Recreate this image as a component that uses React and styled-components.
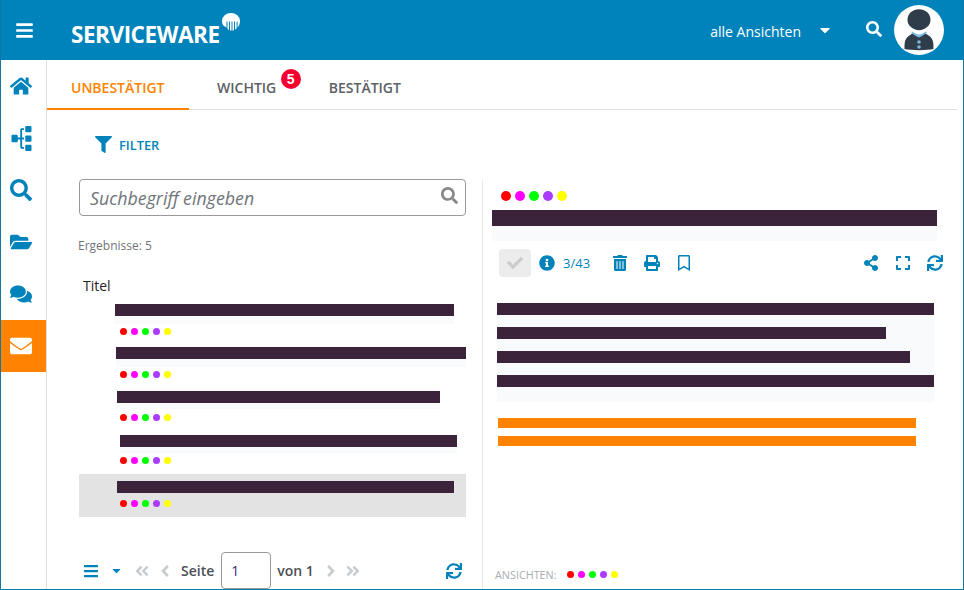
import { createGlobalStyle, styled } from "styled-components";
import {
  FaBars,
  FaRegBookmark,
  FaCaretDown,
  FaCheck,
  FaComments,
  FaEnvelope,
  FaExpand,
  FaFilter,
  FaFolderOpen,
  FaHome,
  FaInfoCircle,
  FaPrint,
  FaSearch,
  FaShareAlt,
  FaSitemap,
  FaSync,
  FaTrashAlt,
  FaAngleDoubleLeft,
  FaAngleDoubleRight,
  FaAngleLeft,
  FaAngleRight,
} from "react-icons/fa";

const BLUE = "#0083bb";
const ORANGE = "#ff8300";
const DARK = "#3b243b";

const GlobalStyle = createGlobalStyle`
  html, body {
    margin: 0;
    padding: 0;
    height: 100%;
    background: #fff;
  }
  body {
    font-family: "Open Sans", "Liberation Sans", sans-serif;
  }
`;

const Frame = styled.div`
  width: 964px;
  height: 590px;
  box-sizing: border-box;
  border: 1px solid #0f78a3;
  border-top: none;
  display: flex;
  flex-direction: column;
  overflow: hidden;
`;

const Header = styled.header`
  height: 60px;
  flex: none;
  margin: 0 -1px;
  background: ${BLUE};
  color: #fff;
  display: flex;
  align-items: center;
  padding: 0 20px 0 15px;
`;

const Burger = styled(FaBars)`
  font-size: 19px;
  margin-right: 37px;
`;

const Logo = styled.div`
  display: flex;
  align-items: flex-start;
  align-self: stretch;
  flex: 1;
`;

const LogoText = styled.span`
  font-size: 22.5px;
  font-weight: 700;
  line-height: 30px;
  letter-spacing: -0.46px;
  margin-top: 20px;
`;

const LogoMark = styled.svg`
  width: 18px;
  height: 18px;
  margin: 13px 0 0 2px;
`;

const ViewSelect = styled.div`
  display: flex;
  align-items: center;
  font-size: 14px;
  margin-right: 33px;
  padding-top: 2px;
  svg {
    margin: -2px 0 0 16px;
    font-size: 16px;
  }
`;

const HeaderSearch = styled(FaSearch)`
  font-size: 16px;
  margin-right: 12px;
  margin-top: -2px;
`;

const Avatar = styled.svg`
  width: 50px;
  height: 50px;
`;

const Body = styled.div`
  flex: 1;
  display: flex;
  min-height: 0;
`;

const Sidebar = styled.nav`
  width: 45px;
  flex: none;
  border-right: 1px solid #e0e0e0;
  display: flex;
  flex-direction: column;
`;

const SideItem = styled.div`
  height: 52px;
  box-sizing: border-box;
  padding-right: 5px;
  display: flex;
  align-items: center;
  justify-content: center;
  font-size: 22px;
  color: ${(p) => (p.$active ? "#fff" : BLUE)};
  background: ${(p) => (p.$active ? ORANGE : "transparent")};
`;

const SitemapIcon = styled(FaSitemap)`
  font-size: 25px;
  transform: rotate(-90deg);
`;

const Main = styled.main`
  flex: 1;
  min-width: 0;
  display: flex;
  flex-direction: column;
`;

const Tabs = styled.div`
  height: 50px;
  flex: none;
  box-sizing: border-box;
  border-bottom: 1px solid #e0e0e0;
  margin-right: 6px;
  display: flex;
`;

const Tab = styled.div`
  position: relative;
  box-sizing: border-box;
  height: 50px;
  padding: 7px 24.5px 0 ${(p) => p.$left}px;
  display: flex;
  align-items: center;
  font-size: 14px;
  font-weight: 600;
  color: ${(p) => (p.$active ? ORANGE : "#5c6166")};
  border-bottom: 2px solid ${(p) => (p.$active ? ORANGE : "transparent")};
`;

const Badge = styled.span`
  position: absolute;
  top: 9px;
  right: 0;
  width: 20px;
  height: 20px;
  border-radius: 50%;
  background: #f5002f;
  color: #fff;
  font-family: "Liberation Sans", sans-serif;
  font-size: 14px;
  font-weight: 700;
  line-height: 20px;
  text-align: center;
`;

const Panes = styled.div`
  flex: 1;
  min-height: 0;
  display: flex;
`;

const LeftPane = styled.section`
  width: 435px;
  flex: none;
  box-sizing: border-box;
  padding: 0 16px 0 32px;
  display: flex;
  flex-direction: column;
`;

const FilterButton = styled.div`
  height: 69px;
  flex: none;
  display: flex;
  align-items: center;
  gap: 7px;
  padding-left: 16px;
  color: ${BLUE};
  font-size: 12.8px;
  font-weight: 600;
  svg {
    font-size: 17px;
  }
`;

const SearchBox = styled.div`
  height: 37px;
  flex: none;
  box-sizing: border-box;
  border: 1px solid #999;
  border-radius: 4px;
  display: flex;
  align-items: center;
  justify-content: space-between;
  padding: 0 7px 0 10px;
  font-size: 17.8px;
  font-style: italic;
  color: #70757a;
  svg {
    font-size: 17px;
    color: #888;
    margin-top: -4px;
  }
`;

const Results = styled.div`
  margin: 21px 0 0 -1px;
  font-size: 12px;
  line-height: 18px;
  color: #70757a;
`;

const ListTitle = styled.div`
  margin: 21px 0 0 4px;
  font-size: 14px;
  line-height: 19px;
  color: #222;
`;

const ResultList = styled.div`
  margin-top: 9px;
  display: flex;
  flex-direction: column;
`;

const ResultRow = styled.div`
  height: ${(p) => p.$height}px;
  box-sizing: border-box;
  padding-top: ${(p) => (p.$selected ? 7 : 0)}px;
  padding-left: ${(p) => p.$indent}px;
  background: ${(p) => (p.$selected ? "#e3e3e3" : "transparent")};
`;

const Bar = styled.div`
  height: ${(p) => p.$height}px;
  background: ${(p) => p.$color || DARK};
`;

const Band = styled.div`
  height: ${(p) => p.$height}px;
  background: #f9fafc;
`;

const Dots = styled.div`
  display: flex;
  align-items: center;
  gap: ${(p) => p.$gap}px;
`;

const Dot = styled.span`
  width: ${(p) => p.$size}px;
  height: ${(p) => p.$size}px;
  border-radius: 50%;
  background: ${(p) => p.$color};
`;

const RowDots = styled(Dots)`
  margin: ${(p) => p.$top}px 0 0 ${(p) => p.$left}px;
`;

const Pager = styled.div`
  margin-top: auto;
  height: 37px;
  flex: none;
  display: flex;
  align-items: center;
  font-size: 14px;
  font-weight: 600;
  color: #4a5056;
`;

const PagerIcon = styled.span`
  display: inline-flex;
  font-size: ${(p) => p.$size || 16}px;
  color: ${(p) => (p.$muted ? "#c9ccce" : BLUE)};
  margin-left: ${(p) => p.$left || 0}px;
  margin-right: ${(p) => p.$right || 0}px;
`;

const PageLabel = styled.span`
  margin-left: 7px;
`;

const PageInput = styled.div`
  width: 50px;
  height: 37px;
  box-sizing: border-box;
  border: 1px solid #999;
  border-radius: 4px;
  margin: 0 6px 0 7px;
  padding-left: 9px;
  font-weight: 400;
  line-height: 35px;
  color: #3b2a7a;
`;

const RightPane = styled.section`
  flex: 1;
  min-width: 0;
  margin-top: 70px;
  border-left: 1px solid #eaeaea;
  display: flex;
  flex-direction: column;
  padding: 11px 26px 0 9px;
`;

const TitleDots = styled(Dots)`
  margin-left: 9px;
  height: 10px;
`;

const TitleBar = styled(Bar)`
  margin-top: 9px;
`;

const Toolbar = styled.div`
  margin: 8px -6px 0 7px;
  height: 28px;
  display: flex;
  align-items: center;
  color: ${BLUE};
  font-size: 13px;
  font-weight: 500;
`;

const CheckButton = styled.div`
  width: 32px;
  height: 28px;
  border-radius: 4px;
  background: #ececec;
  color: #cccccc;
  font-size: 16px;
  display: flex;
  align-items: center;
  justify-content: center;
  margin-right: 8px;
`;

const ToolIcon = styled.span`
  display: inline-flex;
  font-size: 16px;
  margin-left: ${(p) => p.$left || 0}px;
`;

const Pages = styled.span`
  margin-left: 8px;
`;

const Spacer = styled.div`
  flex: 1;
`;

const Content = styled.div`
  margin: 26px 3px 0 5px;
  background: #f9fafc;
  padding-bottom: 15px;
  display: flex;
  flex-direction: column;
  gap: 12px;
`;

const ContentBar = styled(Bar)`
  margin-right: ${(p) => p.$cut}px;
`;

const Marks = styled.div`
  margin: 16px 21px 0 6px;
  display: flex;
  flex-direction: column;
  gap: 8px;
`;

const ViewsFooter = styled.div`
  margin-top: auto;
  height: 29px;
  padding: 0 0 0 3px;
  display: flex;
  align-items: center;
  gap: 10px;
  font-size: 10.8px;
  color: #a9adb1;
`;

const COLORS = ["#ff0000", "#ff00ff", "#00ff00", "#aa3bff", "#ffff00"];

const DotRow = ({ as: Wrap = Dots, size = 7, gap = 4, ...rest }) => (
  <Wrap $gap={gap} {...rest}>
    {COLORS.map((c) => (
      <Dot key={c} $size={size} $color={c} />
    ))}
  </Wrap>
);

const ROWS = [
  { indent: 36, width: 339, band: 8, dotsTop: 4, height: 43 },
  { indent: 37, width: 350, band: 8, dotsTop: 4, height: 44 },
  { indent: 38, width: 323, band: 6, dotsTop: 5, height: 44 },
  { indent: 41, width: 337, band: 6, dotsTop: 4, height: 39 },
  { indent: 38, width: 337, band: 0, dotsTop: 7, height: 43, selected: true },
];

const App = () => {
  return (
    <>
      <GlobalStyle />
      <Frame>
        <Header>
          <Burger />
          <Logo>
            <LogoText>SERVICEWARE</LogoText>
            <LogoMark viewBox="0 0 18 18">
              <path
                d="M0 8a9 8 0 0 1 18 0c0 3-1 5-2.400 6.400V8.600h-1v7l-1.600 .9V8.600h-1v8.600l-1.500 .5V8.600h-1v9.100l-1.500-.4V8.600h-1v8.300l-1.500-.9V8.600h-1v5.800C1 13 0 11 0 8z"
                fill="#fff"
              />
            </LogoMark>
          </Logo>
          <ViewSelect>
            alle Ansichten
            <FaCaretDown />
          </ViewSelect>
          <HeaderSearch />
          <Avatar viewBox="0 0 50 50">
            <circle cx="25" cy="25" r="25" fill="#fff" />
            <path
              d="M10.500 44c0-5 0-9 3-12 2-2 4-3 6-4l5.500 4 5.500-4c2 1 4 2 6 4 3 3 3 7 3 12 -6 1.500-23 1.500-29 0z"
              fill="#2f3c4a"
            />
            <path
              d="M18 26.500c2 1 4 2.500 7 3 3-.5 5-2 7-3l.8 1.500c-2 1-5 3.500-7.800 4.500-2.800-1-5.800-3.500-7.800-4.500z"
              fill="#7fc0e6"
            />
            <ellipse cx="25" cy="14.700" rx="11.500" ry="10.500" fill="#2f3c4a" />
            <circle cx="25" cy="37" r="1.800" fill="#7fb5d5" />
            <circle cx="25" cy="42" r="1.800" fill="#7fb5d5" />
          </Avatar>
        </Header>
        <Body>
          <Sidebar>
            <SideItem><FaHome /></SideItem>
            <SideItem><SitemapIcon /></SideItem>
            <SideItem><FaSearch /></SideItem>
            <SideItem><FaFolderOpen /></SideItem>
            <SideItem><FaComments /></SideItem>
            <SideItem $active><FaEnvelope /></SideItem>
          </Sidebar>
          <Main>
            <Tabs>
              <Tab $active $left={24}>UNBESTÄTIGT</Tab>
              <Tab $left={28}>
                WICHTIG
                <Badge>5</Badge>
              </Tab>
              <Tab $left={28}>BESTÄTIGT</Tab>
            </Tabs>
            <Panes>
              <LeftPane>
                <FilterButton>
                  <FaFilter />
                  FILTER
                </FilterButton>
                <SearchBox>
                  Suchbegriff eingeben
                  <FaSearch />
                </SearchBox>
                <Results>Ergebnisse: 5</Results>
                <ListTitle>Titel</ListTitle>
                <ResultList>
                  {ROWS.map((r) => (
                    <ResultRow
                      key={r.indent + r.width}
                      $indent={r.indent}
                      $height={r.height}
                      $selected={r.selected}
                    >
                      <Bar $height={12} style={{ width: r.width }} />
                      <Band $height={r.band} style={{ width: r.width }} />
                      <DotRow
                        as={RowDots}
                        $top={r.dotsTop}
                        $left={41 - r.indent}
                      />
                    </ResultRow>
                  ))}
                </ResultList>
                <Pager>
                  <PagerIcon $left={4}><FaBars /></PagerIcon>
                  <PagerIcon $left={10.5} $size={13}><FaCaretDown /></PagerIcon>
                  <PagerIcon $left={11.5} $muted><FaAngleDoubleLeft /></PagerIcon>
                  <PagerIcon $left={6} $size={18} $muted><FaAngleLeft /></PagerIcon>
                  <PageLabel>Seite</PageLabel>
                  <PageInput>1</PageInput>
                  von 1
                  <PagerIcon $left={8.5} $size={18} $muted><FaAngleRight /></PagerIcon>
                  <PagerIcon $left={5} $muted><FaAngleDoubleRight /></PagerIcon>
                  <Spacer />
                  <PagerIcon $right={4}><FaSync /></PagerIcon>
                </Pager>
              </LeftPane>
              <RightPane>
                <DotRow as={TitleDots} size={10} gap={4} />
                <TitleBar $height={16} />
                <Band $height={15} />
                <Toolbar>
                  <CheckButton><FaCheck /></CheckButton>
                  <ToolIcon><FaInfoCircle /></ToolIcon>
                  <Pages>3/43</Pages>
                  <ToolIcon $left={22}><FaTrashAlt /></ToolIcon>
                  <ToolIcon $left={16}><FaPrint /></ToolIcon>
                  <ToolIcon $left={16}><FaRegBookmark /></ToolIcon>
                  <Spacer />
                  <ToolIcon><FaShareAlt /></ToolIcon>
                  <ToolIcon $left={16}><FaExpand /></ToolIcon>
                  <ToolIcon $left={16}><FaSync /></ToolIcon>
                </Toolbar>
                <Content>
                  <ContentBar $height={12} $cut={0} />
                  <ContentBar $height={12} $cut={48} />
                  <ContentBar $height={12} $cut={24} />
                  <ContentBar $height={12} $cut={0} />
                </Content>
                <Marks>
                  <Bar $height={10} $color={ORANGE} />
                  <Bar $height={10} $color={ORANGE} />
                </Marks>
                <ViewsFooter>
                  ANSICHTEN:
                  <DotRow />
                </ViewsFooter>
              </RightPane>
            </Panes>
          </Main>
        </Body>
      </Frame>
    </>
  );
};

export default App;
